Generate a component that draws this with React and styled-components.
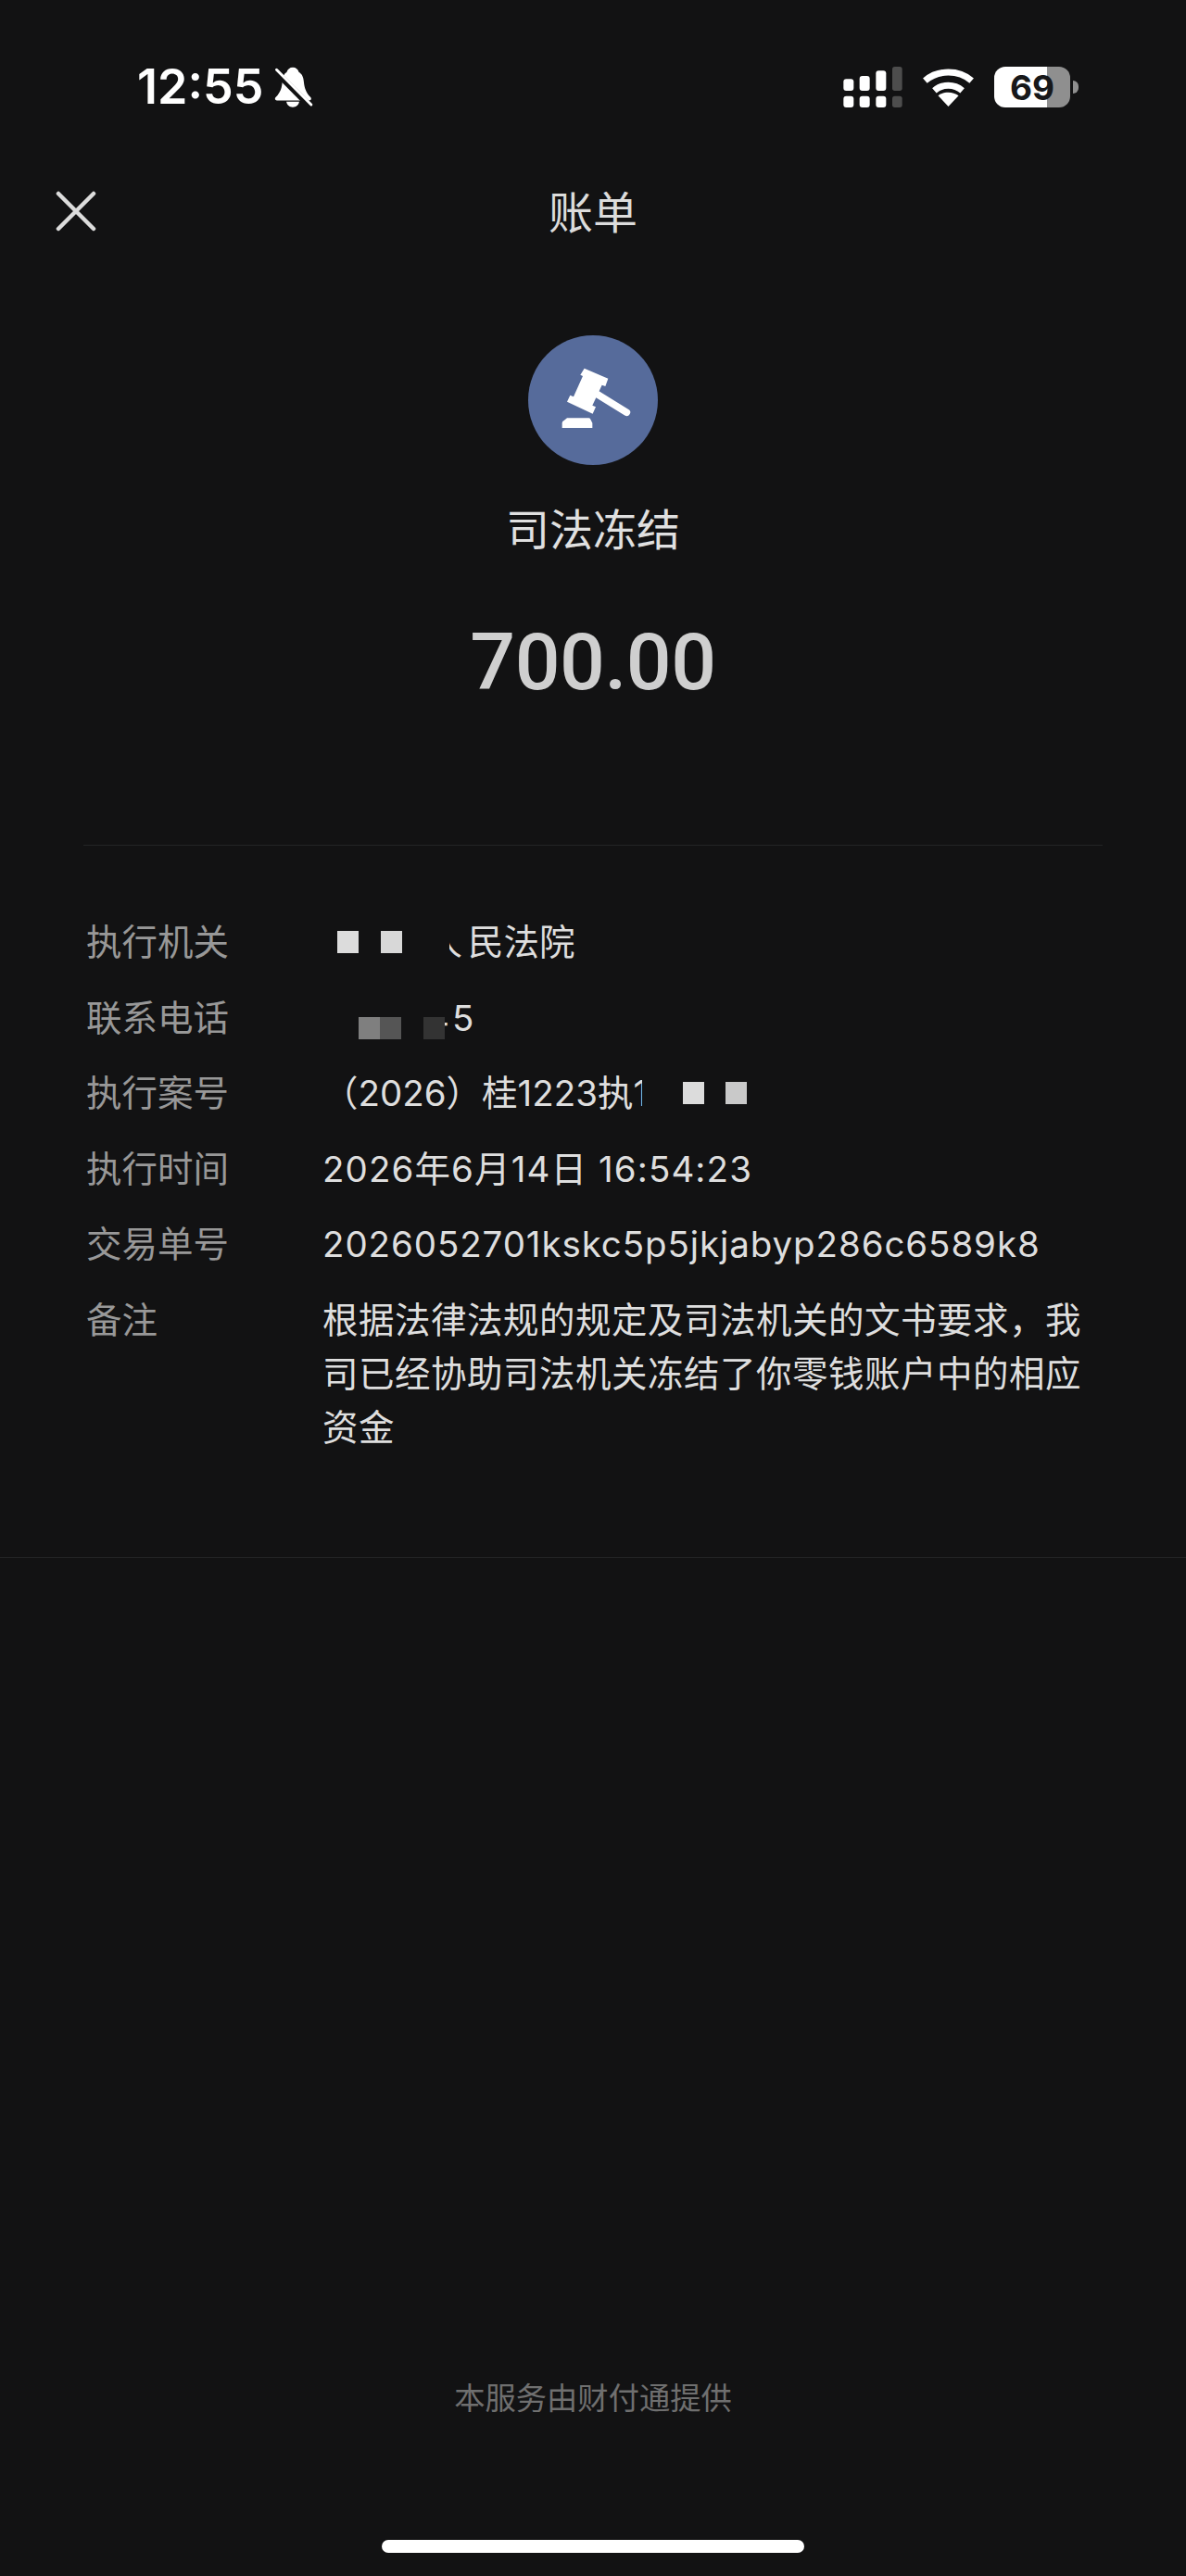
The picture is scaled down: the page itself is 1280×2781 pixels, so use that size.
import React from "react";
import styled, { createGlobalStyle } from "styled-components";

const rows = [
  { label: "执行机关", kind: "court" },
  { label: "联系电话", kind: "phone" },
  { label: "执行案号", kind: "case" },
  { label: "执行时间", text: "2026年6月14日 16:54:23", spacing: 1.1 },
  { label: "交易单号", text: "2026052701kskc5p5jkjabyp286c6589k8", spacing: 0.9 },
  { label: "备注", text: "根据法律法规的规定及司法机关的文书要求，我司已经协助司法机关冻结了你零钱账户中的相应资金", spacing: 0.5 },
];

const App = () => {
  return (
    <Page>
      <GlobalStyle />
      <StatusBar>
        <StatusLeft>
          <Time>12:55</Time>
          <BellIcon />
        </StatusLeft>
        <StatusRight>
          <SignalIcon />
          <WifiIcon />
          <Battery>
            <BatteryBody>69</BatteryBody>
            <BatteryNub />
          </Battery>
        </StatusRight>
      </StatusBar>

      <NavBar>
        <CloseIcon />
        <NavTitle>账单</NavTitle>
      </NavBar>

      <Summary>
        <Badge>
          <GavelIcon />
        </Badge>
        <Merchant>司法冻结</Merchant>
        <Amount>700.00</Amount>
      </Summary>

      <Divider />

      <Details>
        {rows.map((row) => (
          <Row key={row.label}>
            <Label>{row.label}</Label>
            <Value $spacing={row.spacing || 0}>{row.text || <RedactedValue kind={row.kind} />}</Value>
          </Row>
        ))}
      </Details>

      <FullDivider />

      <Footer>本服务由财付通提供</Footer>
      <HomeBar />
    </Page>
  );
};

const RedactedValue = ({ kind }) => {
  if (kind === "court") {
    return (
      <>
        <Mask $left={16} $tone="#dcdcdc" />
        <Mask $left={24} $tone="#d8d8d8" />
        <Clip $left={51} $width={20} $shift={-24.5}>
          <span>人</span>
        </Clip>
        民法院
      </>
    );
  }
  if (kind === "phone") {
    return (
      <>
        <Mask $left={39} $tone="#7f7f7f" $low />
        <Mask $left={0} $tone="#555" $low />
        <Mask $left={24} $tone="#333" $low />
        <Clip $left={0} $width={5} $shift={-20}>
          <span>4</span>
        </Clip>
        <Tail>5</Tail>
      </>
    );
  }
  return (
    <>
      （2026）桂1223执
      <Clip $left={0} $width={9} $shift={0}>
        <span>1</span>
      </Clip>
      <Mask $left={44} $tone="#dcdcdc" />
      <Mask $left={23} $tone="#c9c9c9" />
    </>
  );
};

const BellIcon = () => (
  <BellSvg viewBox="585 98 126 136">
    <path
      fill="#fff"
      d="M645 100c-10 0-17 6-20 16-8 4-13 14-14 28-1 22-6 38-22 54-4 4-2 10 4 10h106c6 0 8-6 4-10-14-14-20-30-22-50-1-18-8-28-16-32-3-10-10-16-20-16zM624 212h42c-2 11-10 18-21 18s-19-7-21-18z"
    />
    <path stroke="#121213" strokeWidth="20" d="M585 110l115 116" />
    <path stroke="#fff" strokeWidth="9" strokeLinecap="round" d="M592 108l113 114" />
  </BellSvg>
);

const SignalIcon = () => (
  <StatusSvg width="64" height="44" viewBox="85 65 190 132">
    <g fill="#fff">
      <rect x="85" y="105" width="33" height="38" rx="9" />
      <rect x="137" y="95" width="33" height="48" rx="9" />
      <rect x="190" y="78" width="33" height="65" rx="9" />
      <rect x="85" y="160" width="33" height="37" rx="9" />
      <rect x="137" y="160" width="33" height="37" rx="9" />
      <rect x="190" y="160" width="33" height="37" rx="9" />
    </g>
    <g fill="#4d4d4d">
      <rect x="243" y="65" width="32" height="78" rx="8" />
      <rect x="243" y="160" width="32" height="37" rx="8" />
    </g>
  </StatusSvg>
);

const WifiIcon = () => (
  <StatusSvg width="57" height="41" viewBox="340 68 170 122">
    <g fill="none" stroke="#fff" strokeWidth="21">
      <path d="M350 107c42-36 108-36 150 0" />
      <path d="M380 139c26-22 64-22 90 0" />
    </g>
    <path fill="#fff" d="M425 190l-33-35c19-14 47-14 66 0z" />
  </StatusSvg>
);

const CloseIcon = () => (
  <CloseSvg viewBox="0 0 44 44">
    <path d="M3 3l38 38M41 3L3 41" />
  </CloseSvg>
);

const GavelIcon = () => (
  <svg width="140" height="140" viewBox="0 0 420 420">
    <path
      fill="#fff"
      d="M182 107l77 33-9 25-11-4-31 66 11 5-10 22-83-39 10-21 11 5 30-67-8-4z"
    />
    <path stroke="#fff" strokeWidth="23" strokeLinecap="round" d="M222 190l97 60" />
    <path fill="#fff" d="M110 300v-16q0-6 6-8l10-8h70q4 0 6 4l6 12v16z" />
  </svg>
);

const GlobalStyle = createGlobalStyle`
  html, body {
    margin: 0;
    padding: 0;
    background: #121213;
  }
`;

const Page = styled.div`
  width: 1280px;
  height: 2781px;
  background: #121213;
  display: flex;
  flex-direction: column;
  overflow: hidden;
  font-family: "Noto Sans CJK SC", sans-serif;
  color: #dedede;
`;

const StatusBar = styled.div`
  height: 44px;
  margin-top: 72px;
  padding: 0 116px 0 148px;
  display: flex;
  align-items: center;
  justify-content: space-between;
`;

const StatusLeft = styled.div`
  display: flex;
  align-items: center;
  gap: 12px;
`;

const Time = styled.span`
  font-family: "Inter", sans-serif;
  font-size: 52px;
  font-weight: 600;
  line-height: 44px;
  color: #fff;
`;

const BellSvg = styled.svg`
  width: 42px;
  height: 45px;
`;

const StatusRight = styled.div`
  display: flex;
  align-items: center;
  gap: 21px;
`;

const StatusSvg = styled.svg`
  display: block;
`;

const Battery = styled.div`
  display: flex;
  align-items: center;
  gap: 3px;
`;

const BatteryBody = styled.div`
  width: 82px;
  height: 44px;
  border-radius: 12px;
  background: linear-gradient(90deg, #fff 0 70%, #8f8f8f 70% 100%);
  display: flex;
  align-items: center;
  justify-content: center;
  font-family: "Inter", sans-serif;
  font-size: 37px;
  font-weight: 700;
  color: #17181a;
`;

const BatteryNub = styled.div`
  width: 6px;
  height: 14px;
  border-radius: 0 7px 7px 0;
  background: #8f8f8f;
`;

const NavBar = styled.div`
  position: relative;
  height: 48px;
  margin-top: 89px;
  display: flex;
  align-items: center;
  justify-content: center;
`;

const CloseSvg = styled.svg`
  position: absolute;
  left: 60px;
  top: 1px;
  width: 44px;
  height: 44px;
  fill: none;
  stroke: #dcdcdc;
  stroke-width: 4.5;
  stroke-linecap: round;
`;

const NavTitle = styled.h1`
  margin: 0;
  padding-bottom: 6px;
  font-size: 48px;
  font-weight: 400;
  line-height: 42px;
  color: #dcdcdc;
`;

const Summary = styled.div`
  display: flex;
  flex-direction: column;
  align-items: center;
  margin-top: 109px;
`;

const Badge = styled.div`
  width: 140px;
  height: 140px;
  border-radius: 50%;
  background: #566b9b;
`;

const Merchant = styled.div`
  margin-top: 39px;
  font-size: 47px;
  line-height: 56px;
  color: #e0e0e0;
`;

const Amount = styled.div`
  margin-top: 68px;
  font-family: "Roboto", sans-serif;
  font-size: 86px;
  font-weight: 500;
  line-height: 100px;
  letter-spacing: -0.5px;
  color: #cfcfcf;
`;

const Divider = styled.div`
  height: 1px;
  margin: 147px 90px 0;
  background: #232425;
`;

const Details = styled.div`
  margin-top: 75px;
  padding: 0 100px 0 93px;
  display: flex;
  flex-direction: column;
  gap: 23.5px;
`;

const Row = styled.div`
  display: grid;
  grid-template-columns: 255px 1fr;
  font-family: "Inter", "Noto Sans CJK SC", sans-serif;
  font-size: 38.5px;
  line-height: 58px;
`;

const Label = styled.div`
  color: #989898;
`;

const Value = styled.div`
  color: #dedede;
  letter-spacing: ${(p) => p.$spacing}px;
`;

const Mask = styled.span`
  display: inline-block;
  width: 23px;
  height: 24px;
  margin-left: ${(p) => p.$left}px;
  background: ${(p) => p.$tone};
  vertical-align: ${(p) => (p.$low ? "-9px" : "2px")};
`;

const Tail = styled.span`
  margin-left: 3px;
`;

const Clip = styled.span`
  display: inline-block;
  width: ${(p) => p.$width}px;
  margin-left: ${(p) => p.$left}px;
  overflow: hidden;
  vertical-align: bottom;
  white-space: nowrap;

  span {
    margin-left: ${(p) => p.$shift}px;
  }
`;

const FullDivider = styled.div`
  height: 1px;
  margin-top: 111px;
  background: #232425;
`;

const Footer = styled.div`
  margin-top: auto;
  text-align: center;
  font-size: 33.3px;
  line-height: 40px;
  color: #6f6f6f;
`;

const HomeBar = styled.div`
  width: 456px;
  height: 14px;
  margin: 135px auto 25px;
  border-radius: 7px;
  background: #fff;
`;

export default App;
